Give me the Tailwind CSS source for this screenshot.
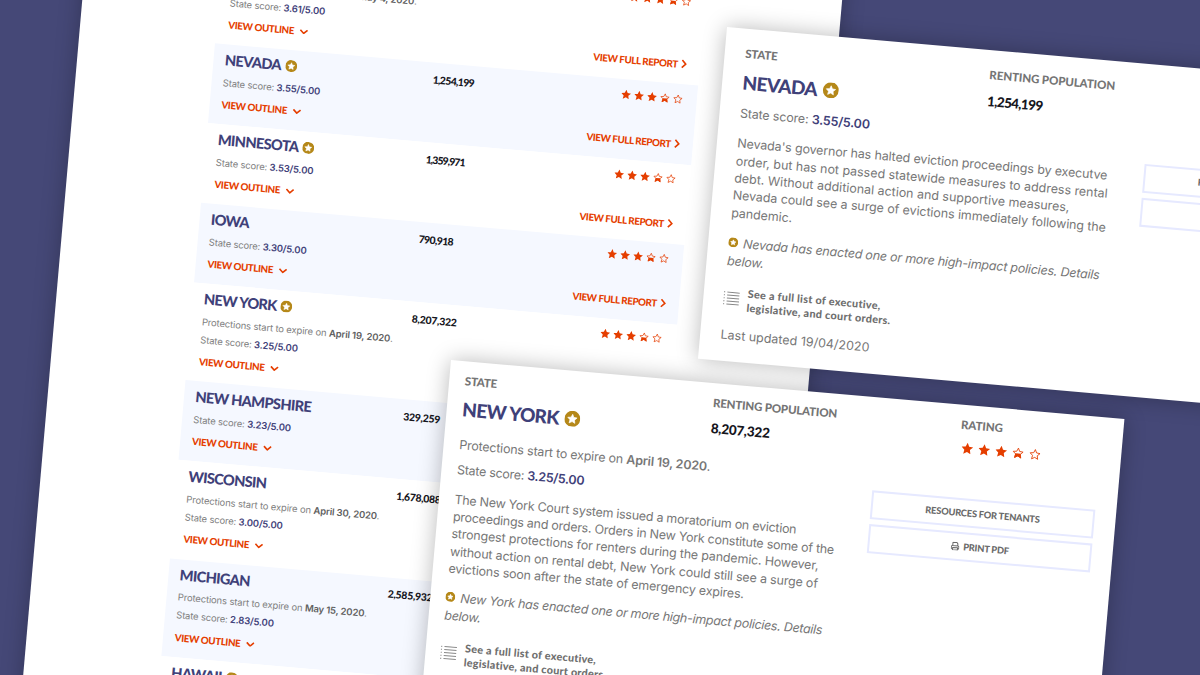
<!DOCTYPE html>
<html lang="en">
<head>
<meta charset="utf-8">
<title>State eviction scorecard</title>
<script src="https://cdn.jsdelivr.net/npm/@tailwindcss/browser@4"></script>
</head>
<body class="bg-[#454877]">
<svg class="hidden">
  <symbol id="star" viewBox="0 0 24 24"><path fill="currentColor" d="M12 0.8l3.5 7.6 8.1 1-6 5.7 1.6 8.2L12 19.2l-7.2 4.1 1.6-8.2-6-5.7 8.1-1z"/></symbol>
  <symbol id="star-empty" viewBox="0 0 24 24"><path fill="none" stroke="currentColor" stroke-width="1.7" d="M12 2.6l2.9 6.5 7 .8-5.2 4.8 1.4 7L12 18.2l-6.1 3.5 1.4-7-5.2-4.8 7-.8z"/></symbol>
  <symbol id="star-half" viewBox="0 0 24 24"><path fill="none" stroke="currentColor" stroke-width="1.7" d="M12 2.6l2.9 6.5 7 .8-5.2 4.8 1.4 7L12 18.2l-6.1 3.5 1.4-7-5.2-4.8 7-.8z"/><path fill="currentColor" d="M6.8 13.5h10.4l1.9 9.8L12 19.2l-7.2 4.1z"/></symbol>
  <symbol id="badge" viewBox="0 0 24 24"><circle cx="12" cy="12" r="12" fill="#b58819"/><path fill="#fff" stroke="#fff" stroke-linejoin="round" d="M12 5.2l2.1 4.5 4.9.6-3.6 3.4.9 4.8-4.3-2.3-4.3 2.3.9-4.8L5 10.3l4.9-.6z"/></symbol>
  <symbol id="badge-small" viewBox="0 0 24 24"><circle cx="12" cy="12" r="12" fill="#b58819"/><path fill="#fff" stroke="#fff" stroke-width="1.5" stroke-linejoin="round" d="M12 6l2 3.9 4.2.6-3 3 .7 4.2-3.9-2-3.9 2 .7-4.2-3-3 4.2-.6z"/></symbol>
  <symbol id="down" viewBox="0 0 10 6"><path fill="none" stroke="currentColor" stroke-width="1.8" d="M1 1l4 3.8L9 1"/></symbol>
  <symbol id="right" viewBox="0 0 6 10"><path fill="none" stroke="currentColor" stroke-width="1.7" d="M1 1l3.9 4L1 9"/></symbol>
  <symbol id="list" viewBox="0 0 16 14"><path fill="none" stroke="currentColor" d="M3.5 1H16M3.5 4H16M3.5 7H16M3.5 10H16M3.5 13H16M0 1h1.3M0 4h1.3M0 7h1.3M0 10h1.3M0 13h1.3"/></symbol>
  <symbol id="printer" viewBox="0 0 18 18"><path fill="none" stroke="currentColor" stroke-width="2" stroke-linejoin="round" d="M4 8V1.5h8L14 4v4M4 14H1.500V10q0-2 2-2h11q2 0 2 2v4H14M4 12h10v4.500H4z"/></symbol>
</svg>

<main class="relative h-[675px] w-[1200px] overflow-hidden bg-[#454877] font-[Lato,sans-serif]">
  <section class="absolute left-[91.4px] top-[-99.6px] h-[850px] w-[757px] origin-top-left rotate-[5deg] bg-white pl-[135.7px] pt-[33.8px] shadow-[0_0_22px_rgba(0,0,0,0.26)]">
    <div id="rows" class="w-[485px]"></div>
  </section>

  <article class="absolute left-[726.5px] top-[26.7px] h-[333px] w-[675px] origin-top-left rotate-[5deg] bg-white pl-[20.5px] pt-[18.4px] shadow-[0_0_22px_rgba(0,0,0,0.28)]">
    <header class="flex h-[48.2px]">
      <div class="w-[245.1px]">
        <div class="h-[14px] text-[11.5px] leading-[14px] font-black tracking-[-0.2px] text-[#757575]">STATE</div>
        <div class="mt-[9.3px] flex h-6 items-center gap-[6px] text-[19px] leading-6 font-black tracking-[-0.65px] text-[#3f4179]">NEVADA<svg class="size-[16px]"><use href="#badge"/></svg></div>
      </div>
      <div class="w-[249px]">
        <div class="h-[14px] text-[11.5px] leading-[14px] font-black tracking-[-0.08px] text-[#757575]">RENTING POPULATION</div>
        <div class="mt-[8.5px] h-5 text-[13.5px] leading-5 font-black tracking-[-0.62px] text-[#16161d]">1,254,199</div>
      </div>
    </header>
    <div class="flex font-[Inter,sans-serif] text-[12.5px] text-[#777]">
      <div class="w-[407.4px] whitespace-nowrap">
        <p class="mt-[9.4px] h-[18px] leading-[18px] tracking-[-0.16px]">State score: <b class="font-semibold text-[#3f4179]">3.55/5.00</b></p>
        <p class="mt-[12.2px] leading-[17.35px]"><span class="tracking-[-0.13px]">Nevada's governor has halted eviction proceedings by executve</span><br><span class="tracking-[-0.03px]">order, but has not passed statewide measures to address rental</span><br><span class="tracking-[-0.01px]">debt. Without additional action and supportive measures,</span><br><span class="tracking-[-0.08px]">Nevada could see a surge of evictions immediately following the</span><br><span class="tracking-[-0.1px]">pandemic.</span></p>
        <p class="mt-[13.5px] [font-feature-settings:'cv11'] italic leading-[17.9px] tracking-[-0.2px]"><svg class="-ml-[0.5px] mr-[5px] mb-[3px] inline-block size-[10px]"><use href="#badge-small"/></svg>Nevada has enacted one or more high-impact policies. Details<br>below.</p>
        <div class="mt-[15.2px] flex items-start gap-[8.5px] font-[Lato,sans-serif] text-[10.8px] leading-[13.8px] font-black tracking-[0.3px] text-[#6f6f6f]"><svg class="-ml-[1px] mt-[5.5px] h-[14px] w-4 text-[#888]"><use href="#list"/></svg><div>See a full list of executive,<br>legislative, and court orders.</div></div>
        <p class="mt-[13.5px] h-[18px] leading-[18px]">Last updated 19/04/2020</p>
      </div>
      <div class="mt-[33.3px] flex w-[224px] flex-col gap-[5.5px] font-[Lato,sans-serif] text-[9.3px] font-black tracking-[-0.2px] text-[#6a6a6a]">
        <div class="flex h-[29px] items-center justify-center border-2 border-[#e6e9ff]">RESOURCES FOR TENANTS</div>
        <div class="flex h-[29px] items-center justify-center gap-1 border-2 border-[#e6e9ff]"><svg class="size-[9px]"><use href="#printer"/></svg>PRINT PDF</div>
      </div>
    </div>
  </article>

  <article class="absolute left-[451px] top-[360px] h-[420px] w-[675.5px] origin-top-left rotate-[5deg] bg-white pl-[15.7px] pt-[12.6px] shadow-[0_0_22px_rgba(0,0,0,0.28)]">
    <header class="flex h-[48.2px]">
      <div class="w-[249.1px]">
        <div class="h-[14px] text-[11.5px] leading-[14px] font-black tracking-[-0.2px] text-[#757575]">STATE</div>
        <div class="mt-[9.3px] flex h-6 items-center gap-[6px] text-[19px] leading-6 font-black tracking-[-0.65px] text-[#3f4179]">NEW YORK<svg class="-mb-px size-[16px]"><use href="#badge"/></svg></div>
      </div>
      <div class="w-[249px]">
        <div class="h-[14px] text-[11.5px] leading-[14px] font-black tracking-[-0.17px] text-[#757575]">RENTING POPULATION</div>
        <div class="mt-[8.5px] h-5 text-[13.5px] leading-5 font-black tracking-[-0.24px] text-[#16161d]">8,207,322</div>
      </div>
      <div>
        <div class="h-[14px] text-[11.5px] leading-[14px] font-black tracking-[-0.1px] text-[#757575]">RATING</div>
        <div class="mt-[9.3px] ml-[1.8px] flex h-[14px] items-center gap-[5.2px] text-[#e53e00]"><svg class="size-3"><use href="#star"/></svg><svg class="size-3"><use href="#star"/></svg><svg class="size-3"><use href="#star"/></svg><svg class="size-3"><use href="#star-half"/></svg><svg class="size-3"><use href="#star-empty"/></svg></div>
      </div>
    </header>
    <div class="flex font-[Inter,sans-serif] text-[12.5px] text-[#777]">
      <div class="w-[415.3px] whitespace-nowrap">
        <p class="mt-[14.6px] h-[18px] leading-[18px] tracking-[-0.2px]">Protections start to expire on <b class="font-semibold">April 19, 2020</b>.</p>
        <p class="mt-[7px] h-[18px] leading-[18px] tracking-[-0.28px]">State score: <b class="font-semibold text-[#3f4179]">3.25/5.00</b></p>
        <p class="mt-[11.3px] leading-[17.35px]"><span class="tracking-[-0.26px]">The New York Court system issued a moratorium on eviction</span><br><span class="tracking-[-0.25px]">proceedings and orders. Orders in New York constitute some of the</span><br><span class="tracking-[-0.17px]">strongest protections for renters during the pandemic. However,</span><br><span class="tracking-[-0.17px]">without action on rental debt, New York could still see a surge of</span><br><span class="tracking-[-0.19px]">evictions soon after the state of emergency expires.</span></p>
        <p class="mt-[11.6px] [font-feature-settings:'cv11'] italic leading-[17.9px] tracking-[-0.28px]"><svg class="-ml-[0.5px] mr-[5px] mb-[3px] inline-block size-[10px]"><use href="#badge-small"/></svg>New York has enacted one or more high-impact policies. Details<br>below.</p>
        <div class="mt-[15.6px] flex items-start gap-[8.5px] font-[Lato,sans-serif] text-[10.8px] leading-[13.8px] font-black tracking-[0.24px] text-[#6f6f6f]"><svg class="-ml-[1px] mt-[5.5px] h-[14px] w-4 text-[#888]"><use href="#list"/></svg><div>See a full list of executive,<br>legislative, and court orders.</div></div>
      </div>
      <div class="mt-[32.2px] flex w-[224px] flex-col gap-[5.5px] font-[Lato,sans-serif] text-[9.3px] font-black tracking-[-0.2px] text-[#6a6a6a]">
        <div class="flex h-[29px] items-center justify-center border-2 border-[#e6e9ff]">RESOURCES FOR TENANTS</div>
        <div class="flex h-[29px] items-center justify-center gap-1 border-2 border-[#e6e9ff]"><svg class="size-[9px]"><use href="#printer"/></svg>PRINT PDF</div>
      </div>
    </div>
  </article>
</main>

<script>
// name, renting population, expiry date, score, has high-impact badge, population tracking
const states = [
  ['', '', 'May 4, 2020', '3.61', false, ''],
  ['NEVADA', '1,254,199', '', '3.55', true, 'tracking-[-0.62px]'],
  ['MINNESOTA', '1,359,971', '', '3.53', true, 'tracking-[-0.9px]'],
  ['IOWA', '790,918', '', '3.30', false, 'tracking-[-0.6px]'],
  ['NEW YORK', '8,207,322', 'April 19, 2020', '3.25', true, 'tracking-[-0.25px]'],
  ['NEW HAMPSHIRE', '329,259', '', '3.23', false, 'tracking-[-0.25px]'],
  ['WISCONSIN', '1,678,088', 'April 30, 2020', '3.00', false, 'tracking-[-0.3px]'],
  ['MICHIGAN', '2,585,932', 'May 15, 2020', '2.83', false, 'tracking-[-0.25px]'],
  ['HAWAII', '', '', '', true, ''],
];
const star = id => `<svg class="size-[10px]"><use href="#${id}"/></svg>`;
const rating = `<div class="mr-[2.6px] flex h-[18px] items-center gap-[3px]">${star('star')}${star('star')}${star('star')}${star('star-half')}${star('star-empty')}</div>`;
document.getElementById('rows').innerHTML = states.map(([name, pop, date, score, badge, tracking], i) => `
  <div class="flex ${date ? 'h-[98.3px]' : 'h-[80px]'} ${i % 2 ? 'bg-[#f5f8ff]' : 'bg-white'} pl-[11.6px] pr-[11px] whitespace-nowrap">
    <div class="w-[208.8px] pt-[7px] font-[Inter,sans-serif] text-[9.5px] text-[#808080]">
      <div class="flex h-[18px] items-center gap-[4px] font-[Lato,sans-serif] text-[14.6px] font-black tracking-[-0.65px] text-[#3f4179]">${name}${badge ? '<svg class="size-3"><use href="#badge"/></svg>' : ''}</div>
      ${score ? `<div class="mt-[4.8px] leading-[18px]">${date ? `<div class="tracking-[-0.15px]">Protections start to expire on <b class="font-semibold text-[#606060]">${date}</b>.</div>` : ''}<div class="tracking-[-0.18px]">State score: <b class="font-semibold text-[#3f4179]">${score}/5.00</b></div></div>
      <div class="mt-[4.4px] ml-[0.5px] flex h-4 items-center gap-[5px] font-[Lato,sans-serif] text-[9.8px] font-black tracking-[-0.4px] text-[#e53e00]">VIEW OUTLINE<svg class="mt-px h-[5.5px] w-[9px]"><use href="#down"/></svg></div>` : ''}
    </div>
    <div class="pt-[7.6px] text-[10.4px] leading-[18px] font-black ${tracking} text-[#16161d]">${pop}</div>
    ${score ? `<div class="ml-auto flex flex-col items-end justify-between pt-[6px] pb-3 text-[#e53e00]">
      ${rating}
      <div class="mr-[1.3px] flex h-4 items-center gap-[3.5px] text-[9.8px] font-black tracking-[-0.42px]">VIEW FULL REPORT<svg class="h-[9.5px] w-[6px]"><use href="#right"/></svg></div>
    </div>` : ''}
  </div>`).join('');
</script>
</body>
</html>
